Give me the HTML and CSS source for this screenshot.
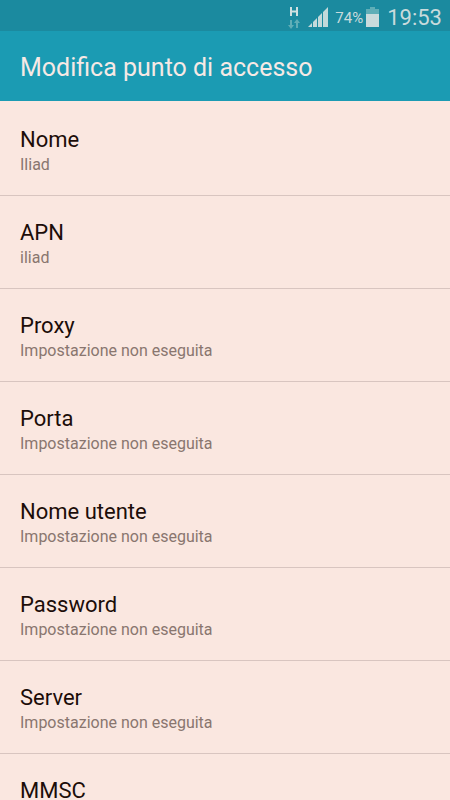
FILE: index.html
```html
<!DOCTYPE html>
<html lang="it">
<head>
    <meta charset="UTF-8">
    <meta name="viewport" content="width=device-width, initial-scale=1.0">
    <title>Modifica punto di accesso</title>
    <link rel="stylesheet" href="styles.css">
</head>
<body>
    <div class="status-bar">
        <svg class="network" width="12" height="24" viewBox="0 0 12 24" aria-hidden="true">
            <path d="M3 2v9M9 2v9M3 6.5h6" fill="none" stroke="#cfe0e0" stroke-width="2"/>
            <path d="M2 15h2v5h2l-3 4-3-4h2zM8 23h2v-5h2l-3-4-3 4h2z" fill="#5faeb7"/>
        </svg>
        <svg class="signal" width="20" height="20" viewBox="0 0 20 20" aria-hidden="true">
            <path d="M0 20l4-4v4zM5 15l4-4v9H5zM10 10l4-4v14h-4zM15 5l5-5v20h-5z" fill="#c3d9da"/>
        </svg>
        <span class="battery-level">74%</span>
        <svg class="battery" width="13" height="20" viewBox="0 0 13 20" aria-hidden="true">
            <path d="M4 0h5v2h4v5H0V2h4z" fill="#5faeb7"/>
            <path d="M0 7h13v13H0z" fill="#cadbdc"/>
        </svg>
        <span class="clock">19:53</span>
    </div>

    <header class="action-bar">
        <h1>Modifica punto di accesso</h1>
    </header>

    <ul class="settings">
        <li class="setting">
            <h2>Nome</h2>
            <p>Iliad</p>
        </li>
        <li class="setting">
            <h2>APN</h2>
            <p>iliad</p>
        </li>
        <li class="setting">
            <h2>Proxy</h2>
            <p>Impostazione non eseguita</p>
        </li>
        <li class="setting">
            <h2>Porta</h2>
            <p>Impostazione non eseguita</p>
        </li>
        <li class="setting">
            <h2>Nome utente</h2>
            <p>Impostazione non eseguita</p>
        </li>
        <li class="setting">
            <h2>Password</h2>
            <p>Impostazione non eseguita</p>
        </li>
        <li class="setting">
            <h2>Server</h2>
            <p>Impostazione non eseguita</p>
        </li>
        <li class="setting">
            <h2>MMSC</h2>
        </li>
    </ul>
</body>
</html>
```
FILE: styles.css
```css
* {
    box-sizing: border-box;
}
body {
    font-family: Roboto, sans-serif;
    margin: 0;
    height: 100vh;
    overflow: hidden;
    background-color: #fae7e0;
    color: #1c0d09;
}
h1, h2, p, ul {
    margin: 0;
    padding: 0;
    font-weight: normal;
}
.status-bar {
    display: flex;
    justify-content: flex-end;
    align-items: center;
    height: 31px;
    padding: 2px 8px 0 0;
    background-color: #1b8a9f;
    color: #c9dbdc;
}
.network {
    margin-right: 8px;
}
.signal {
    margin-right: 7px;
}
.battery-level {
    font-size: 15px;
    line-height: 20px;
    padding-top: 2px;
    margin-right: 3px;
}
.battery {
    margin-right: 8px;
}
.clock {
    font-size: 22px;
    line-height: 26px;
    padding-top: 2px;
}
.action-bar {
    display: flex;
    align-items: center;
    height: 70px;
    padding: 4px 20px 0;
    background-color: #1b9bb3;
    color: #f6e9e5;
}
.action-bar h1 {
    font-size: 25px;
    line-height: 32px;
}
.settings {
    list-style: none;
    padding-top: 2px;
}
.setting {
    padding: 22px 20px 20px;
    border-bottom: 1px solid #d8c5c0;
}
.setting h2 {
    font-size: 22px;
    line-height: 30px;
}
.setting p {
    font-size: 16px;
    line-height: 20px;
    color: #89766f;
}
```
